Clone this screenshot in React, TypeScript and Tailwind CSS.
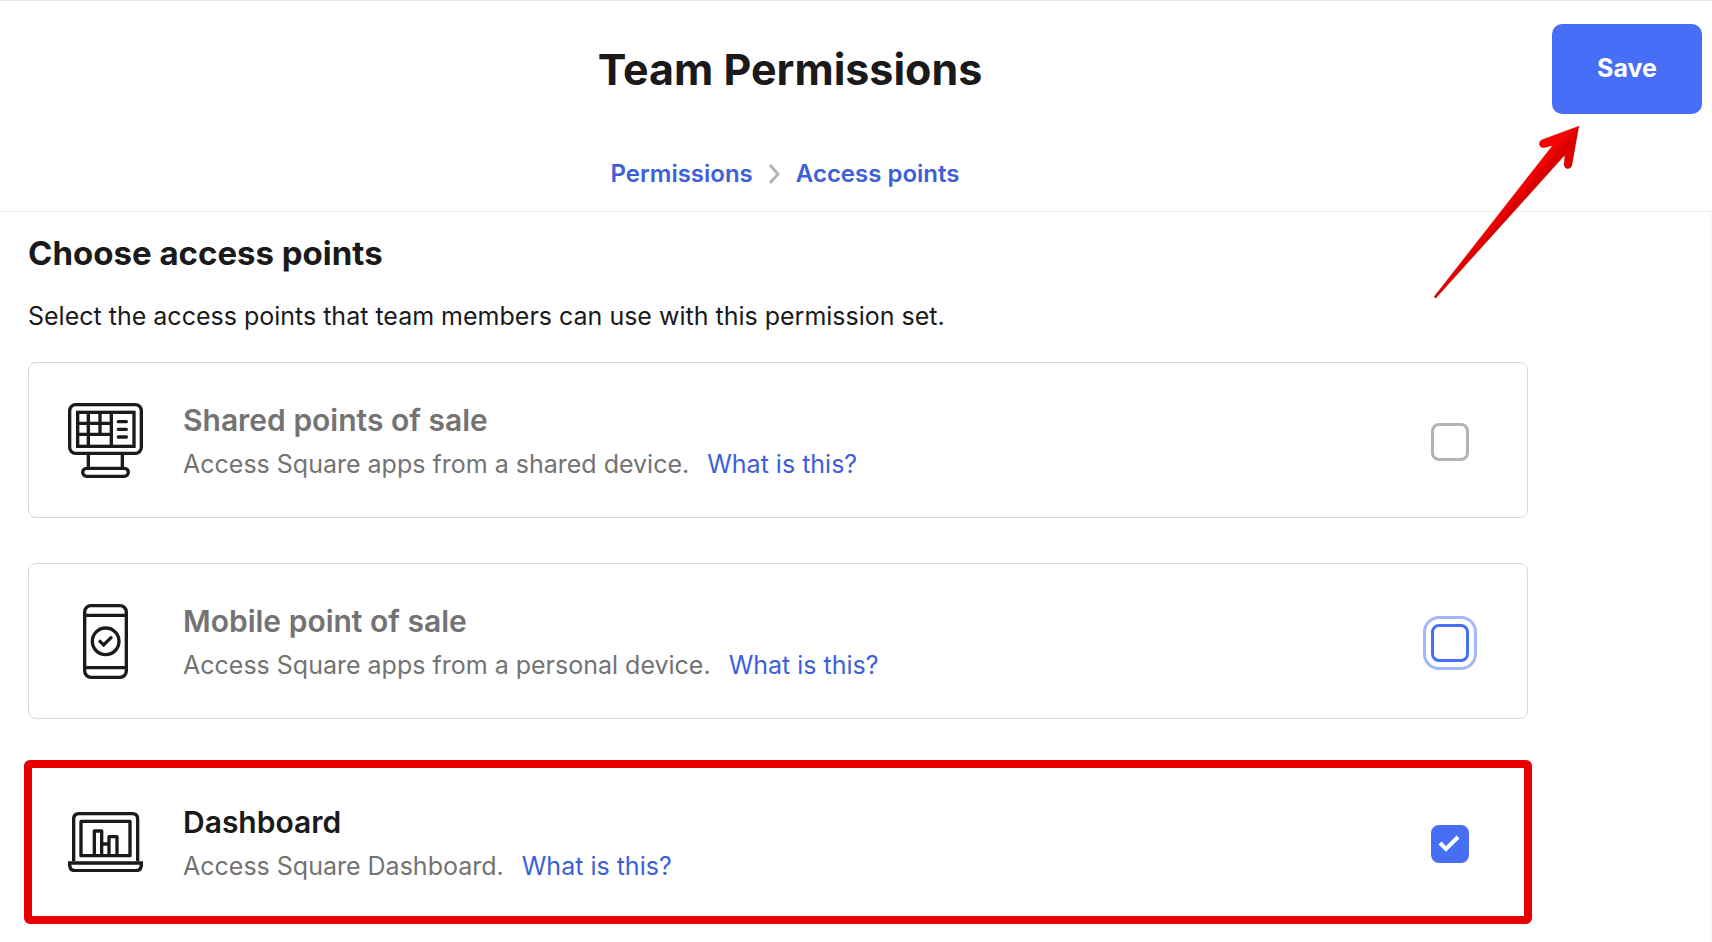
import cls from "clsx";
import { useState, type ReactNode } from "react";

const iconProps = {
  fill: "none",
  stroke: "currentColor",
  strokeWidth: 10,
  "aria-hidden": true,
};

function RegisterIcon() {
  return (
    <svg viewBox="0 0 225 225" className="w-[75px]" {...iconProps}>
      <rect x="5" y="5" width="215" height="146" rx="18" />
      <rect x="29" y="28" width="169" height="102" />
      <path d="M61 28V130M96 28V94M130 28V130M29 61H130M29 94H130" />
      <path d="M151 56H175M151 79H175M151 102H175" strokeLinecap="round" />
      <path d="M61 151V196M163 151V196" />
      <rect x="44" y="196" width="137" height="24" rx="12" />
    </svg>
  );
}

function PhoneIcon() {
  return (
    <svg viewBox="0 0 225 225" className="w-[75px]" {...iconProps}>
      <rect x="50" y="5" width="125" height="215" rx="19" />
      <path d="M50 34H175M50 191H175" />
      <circle cx="113" cy="112" r="40" />
      <path d="M96 112L107 123L129 101" strokeLinecap="round" />
    </svg>
  );
}

function LaptopIcon() {
  return (
    <svg viewBox="0 0 225 181" className="w-[75px]" {...iconProps}>
      <path d="M17 148V21Q17 5 33 5H193Q209 5 209 21V148" />
      <rect x="39" y="28" width="147" height="103" strokeLinejoin="round" />
      <path d="M79 131V57H101V131M123 131V74H147V131M101 96H123" strokeLinejoin="round" />
      <path d="M5 153H220V158Q220 176 202 176H23Q5 176 5 158Z" />
    </svg>
  );
}

function Arrow() {
  return (
    <svg
      viewBox="0 0 438 525"
      className="pointer-events-none absolute right-[132px] top-[124px] w-[146px]"
      aria-hidden="true"
    >
      <defs>
        <linearGradient id="arrow" gradientUnits="userSpaceOnUse" x1="200" y1="230" x2="245" y2="268">
          <stop offset="0" stopColor="#f60404" />
          <stop offset="0.4" stopColor="#f20303" />
          <stop offset="0.7" stopColor="#d60000" />
          <stop offset="1" stopColor="#e00000" />
        </linearGradient>
      </defs>
      <path
        d="M435 3L323 44Q314 49 316 59Q319 69 331 68L355 62L1 514Q0 520 6 519L392 91L390 119Q392 131 402 131Q412 130 414 121Z"
        fill="url(#arrow)"
        stroke="#8a2020"
        strokeOpacity="0.5"
        strokeWidth="1"
      />
    </svg>
  );
}

type AccessPoint = {
  id: string;
  title: string;
  description: string;
  icon: ReactNode;
};

const accessPoints: AccessPoint[] = [
  {
    id: "shared",
    title: "Shared points of sale",
    description: "Access Square apps from a shared device.",
    icon: <RegisterIcon />,
  },
  {
    id: "mobile",
    title: "Mobile point of sale",
    description: "Access Square apps from a personal device.",
    icon: <PhoneIcon />,
  },
  {
    id: "dashboard",
    title: "Dashboard",
    description: "Access Square Dashboard.",
    icon: <LaptopIcon />,
  },
];

type CardProps = {
  point: AccessPoint;
  checked: boolean;
  focused: boolean;
  highlighted: boolean;
  onToggle: () => void;
};

function AccessPointCard({ point, checked, focused, highlighted, onToggle }: CardProps) {
  return (
    <li
      className={cls(
        "flex h-[156px] items-center border border-[#d9d9d9] pl-[39px] pr-[58px]",
        highlighted
          ? "rounded-xs outline-8 -outline-offset-4 outline-[#e60000]"
          : "rounded-lg"
      )}
    >
      {point.icon}
      <div className="ml-10 flex-1 pt-1">
        <label
          htmlFor={point.id}
          className={cls("block text-[30px] leading-[44px] font-semibold", {
            "text-[#1a1a1a]": checked,
            "text-[#737373]": !checked,
          })}
        >
          {point.title}
        </label>
        <p className="text-[25px] leading-[44px] text-[#737373]">
          {point.description}
          <a href="#" className="ml-[18px] text-[#3d5fd9]">
            What is this?
          </a>
        </p>
      </div>
      <span className="relative mt-1 flex">
        <input
          id={point.id}
          type="checkbox"
          checked={checked}
          onChange={onToggle}
          className={cls("size-[38px] appearance-none rounded-lg border-3", {
            "border-[#476ef6] bg-[#476ef6]": checked,
            "border-[#476ef6] outline-3 outline-offset-5 outline-[#a3b7fb]": focused && !checked,
            "border-[#b3b3b3]": !focused && !checked,
          })}
        />
        {checked && (
          <svg
            viewBox="0 0 38 38"
            className="pointer-events-none absolute inset-0 size-full"
            fill="none"
            stroke="white"
            strokeWidth="4"
            aria-hidden="true"
          >
            <path d="M9 18L15 24L27 12" />
          </svg>
        )}
      </span>
    </li>
  );
}

export default function App() {
  const [selected, setSelected] = useState(["dashboard"]);

  const toggle = (id: string) =>
    setSelected(
      selected.includes(id) ? selected.filter((s) => s !== id) : [...selected, id]
    );

  return (
    <div className="flex min-h-screen flex-col bg-white font-['Inter',sans-serif] text-[#1a1a1a]">
      <header className="relative border-y border-t-[#e6e6e6] border-b-[#f0f0f0] pb-[17px] pl-7 pr-[10px] pt-[23px]">
        <div className="flex items-center">
          <h1 className="flex-1 text-center text-[43px] leading-[90px] font-bold">
            Team Permissions
          </h1>
          <button
            type="button"
            className="h-[90px] w-[150px] rounded-[10px] bg-[#476ef6] text-[25px] font-bold text-white"
          >
            Save
          </button>
        </div>
        <nav
          aria-label="Breadcrumb"
          className="mt-10 mr-40 flex items-center justify-center gap-4 text-[24px] leading-10 font-semibold text-[#3d5fd9]"
        >
          <a href="#">Permissions</a>
          <svg viewBox="0 0 11 20" className="h-5" fill="none" stroke="#b3b3b3" strokeWidth="3" aria-hidden="true">
            <path d="M1 1L9 10L1 19" />
          </svg>
          <a href="#">Access points</a>
        </nav>
        <Arrow />
      </header>

      <main className="flex-1 border-r-3 border-[#fafafa] pb-5 pl-7 pr-[181px] pt-4">
        <h2 className="text-[33px] leading-[50px] font-bold">Choose access points</h2>
        <p className="mt-4 text-[25px] leading-[44px]">
          Select the access points that team members can use with this permission set.
        </p>
        <ul className="mt-6 flex flex-col gap-[45px]">
          {accessPoints.map((point) => (
            <AccessPointCard
              key={point.id}
              point={point}
              checked={selected.includes(point.id)}
              focused={point.id === "mobile"}
              highlighted={point.id === "dashboard"}
              onToggle={() => toggle(point.id)}
            />
          ))}
        </ul>
      </main>
    </div>
  );
}
